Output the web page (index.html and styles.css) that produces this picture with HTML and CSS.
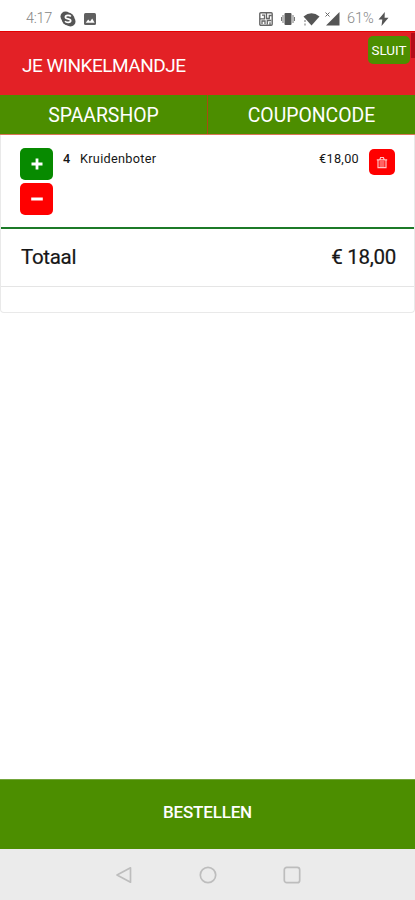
FILE: index.html
```html
<!DOCTYPE html>
<html lang="nl">
<head>
<meta charset="utf-8">
<title>Je winkelmandje</title>
<link rel="stylesheet" href="styles.css">
</head>
<body>
<div class="status">
  <span class="clock">4:17</span>
  <svg class="skype" width="16" height="16" viewBox="0 0 16 16"><circle cx="5.5" cy="5.5" r="5" fill="#555"/><circle cx="10.5" cy="10.5" r="5" fill="#555"/><circle cx="8" cy="8" r="6.4" fill="#555"/><path d="M10.8 5.5C9.7 4 5.4 4 5.4 6.2c0 2.2 5.3 1.2 5.3 3.5 0 2.2-4.5 2.2-5.6.4" fill="none" stroke="#fff" stroke-width="1.7"/></svg>
  <svg class="photo" width="14" height="14" viewBox="0 0 14 14"><rect x="1" y="1" width="12" height="12" rx="1.5" fill="#606060"/><path d="M2.7 10.8l2.5-3.2 1.8 2 2.2-3 2.4 4.2z" fill="#fff"/></svg>
  <div class="system">
    <svg width="14" height="14" viewBox="0 0 14 14"><rect x=".8" y=".8" width="12.4" height="12.4" rx="1" fill="none" stroke="#666" stroke-width="1.4"/><path d="M1 6.8h4.5V3.2H3M7.5 1v5.500h2.800V3.500h2.500M3 12V9h3v3M8.300 12.500v-4h4M11 10.200V13" fill="none" stroke="#666" stroke-width="1.3"/></svg>
    <svg width="14" height="14" viewBox="0 0 14 14"><rect x="3.5" y="1" width="7" height="12" rx="1" fill="#555"/><path d="M2 3v8M12 3v8M.5 5v4M13.5 5v4" stroke="#777" stroke-width="1"/></svg>
    <svg width="17" height="14" viewBox="0 0 17 14"><path d="M.5 4.500Q8.500-1.800 16.500 4.500L8.500 13.500z" fill="#555"/><path d="M2 8v2M2 11.500v2" stroke="#999" stroke-width="1.400"/></svg>
    <svg class="signal" width="15" height="14" viewBox="0 0 15 14"><path d="M14.500 0v13.500H1z" fill="#555"/><path d="M.5 .5l4 4M4.500 .5l-4 4" stroke="#666" stroke-width="1"/></svg>
    <span class="battery">61%</span>
    <svg class="bolt" width="11" height="14" viewBox="0 0 11 14"><path d="M6.800 0L.5 7.600h3.800L3.500 14l7-8.300H6.600z" fill="#555"/></svg>
  </div>
</div>
<header class="header">
  <h1 class="title">JE WINKELMANDJE</h1>
  <button class="close">SLUIT</button>
  <i class="edge"></i>
</header>
<nav class="tabs">
  <a class="tab">SPAARSHOP</a>
  <a class="tab">COUPONCODE</a>
</nav>
<main class="cart">
  <div class="item">
    <div class="steps">
      <button class="step plus"><svg width="12" height="12" viewBox="0 0 12 12"><path d="M6 .5v11M.5 6h11" stroke="#fff" stroke-width="2.800"/></svg></button>
      <button class="step minus"><svg width="12" height="12" viewBox="0 0 12 12"><path d="M.2 6h11.600" stroke="#fff" stroke-width="3"/></svg></button>
    </div>
    <span class="qty">4</span>
    <span class="name">Kruidenboter</span>
    <span class="price">€18,00</span>
    <button class="trash"><svg width="12" height="13" viewBox="0 0 12 13"><path d="M.8 3.800h10.400M3.800 3.600L4.600 1.500h2.800l.8 2.100M2 4v7.700h8V4M3.500 6h5M3.500 8h5M3.500 10h5" fill="none" stroke="#ffc4c4" stroke-width="1.200"/></svg></button>
  </div>
  <div class="total"><span>Totaal</span><span>€ 18,00</span></div>
</main>
<button class="order">BESTELLEN</button>
<div class="navbar">
  <svg width="18" height="18" viewBox="0 0 18 18"><path d="M15.500 1.800v14.400L2 9z"/></svg>
  <svg width="18" height="18" viewBox="0 0 18 18"><circle cx="9" cy="9" r="7.700"/></svg>
  <svg width="18" height="18" viewBox="0 0 18 18"><rect x="1.300" y="1.300" width="15.400" height="15.400" rx="2.500"/></svg>
</div>
</body>
</html>
```
FILE: styles.css
```css
* { box-sizing: border-box; }
body {
  margin: 0;
  height: 900px;
  display: flex;
  flex-direction: column;
  background: #fff;
  color: #161616;
  font-family: Roboto, sans-serif;
  overflow: hidden;
}
button { border: 0; padding: 0; margin: 0; font-family: inherit; color: #fff; }
svg { display: block; flex: none; }
.status {
  height: 31px;
  padding: 6px 26px 0 26px;
  display: flex;
  align-items: center;
  color: #858585;
  font-weight: 300;
}
.clock { font-size: 14.5px; width: 34px; letter-spacing: -0.3px; }
.photo { margin-left: 7px; }
.system { margin-left: auto; display: flex; align-items: center; gap: 8px; }
.signal { margin-left: -3px; }
.battery { font-size: 14.5px; width: 26px; letter-spacing: -0.1px; white-space: nowrap; margin-left: -1px; }
.bolt { margin-left: -3px; }
.header {
  position: relative;
  height: 64px;
  background: #e32126;
  border-top: 1px solid #e40000;
  padding: 0 5px 0 22px;
  display: flex;
  justify-content: space-between;
  color: #fff;
}
.title { margin: 21px 0 0; font-size: 19px; line-height: 25px; font-weight: 400; letter-spacing: -0.5px; }
.close {
  width: 42px;
  height: 28px;
  margin-top: 4px;
  border-radius: 5px;
  background: #4c8e00;
  font-size: 13.4px;
  font-weight: 400;
}
.edge { position: absolute; right: 0; top: 1px; width: 4px; height: 25px; background: #b50d18; }
.tabs {
  height: 40px;
  display: flex;
  background: #4c8e00;
  border-bottom: 1px solid #d97556;
}
.tab {
  flex: 1;
  display: flex;
  justify-content: center;
  align-items: center;
  padding-top: 2px;
  color: #fff;
  font-size: 19.4px;
}
.tab + .tab { border-left: 1px solid #a84c10; }
.cart { height: 178px; border: 1px solid #e9e9e9; border-top: 0; border-radius: 0 0 4px 4px; }
.item { height: 94px; padding: 13px 19px 0 19px; display: flex; border-bottom: 2px solid #1c7a28; font-size: 12.7px; line-height: 21px; }
.steps { width: 33px; display: flex; flex-direction: column; gap: 3px; }
.step { width: 33px; height: 32px; border-radius: 5px; display: flex; align-items: center; justify-content: center; }
.plus { background: #078a00; }
.minus { background: #f00; }
.qty { width: 17px; margin-left: 10px; font-weight: 500; }
.name { letter-spacing: 0.3px; }
.price { margin-left: auto; letter-spacing: 0.3px; }
.trash { width: 26px; height: 26px; margin: 1px 0 0 10px; border-radius: 5px; background: #f00; display: flex; align-items: center; justify-content: center; }
.total { height: 58px; padding: 0 18px 2px 20px; display: flex; justify-content: space-between; align-items: center; border-bottom: 1px solid #e5e5e5; font-size: 20.5px; letter-spacing: -0.3px; -webkit-text-stroke: 0.2px; }
.order { height: 70px; margin-top: auto; background: #4c8e00; border-top: 1px solid #74a63c; font-size: 17px; letter-spacing: -0.2px; font-weight: 500; padding-bottom: 6px; }
.navbar { height: 51px; background: #ebebeb; display: flex; justify-content: center; gap: 66px; padding-top: 17px; }
.navbar svg { fill: none; stroke: #bdbdbd; stroke-width: 1.7; stroke-linejoin: round; }
```
